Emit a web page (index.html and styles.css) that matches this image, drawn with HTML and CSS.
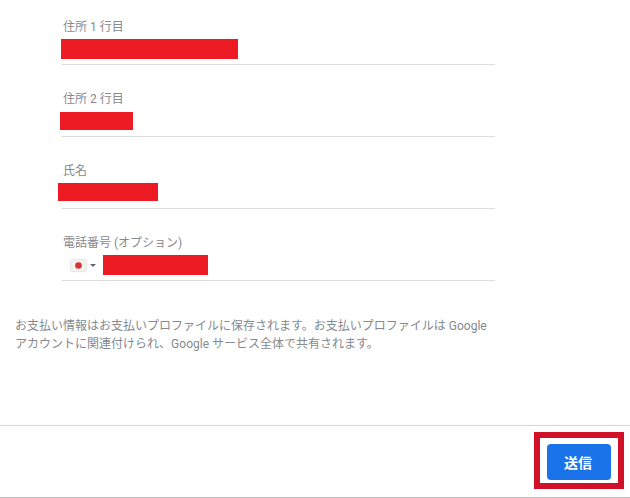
FILE: index.html
```html
<html>
    <head>
        <title>お支払い情報</title>
        <link rel="stylesheet" href="styles.css">
    </head>
    <body>
        <div class="form">
            <div class="field">
                <div class="label">住所 1 行目</div>
                <div class="value"><span class="redact redact1"></span></div>
            </div>
            <div class="field">
                <div class="label">住所 2 行目</div>
                <div class="value"><span class="redact redact2"></span></div>
            </div>
            <div class="field">
                <div class="label">氏名</div>
                <div class="value"><span class="redact redact3"></span></div>
            </div>
            <div class="field">
                <div class="label">電話番号 (オプション)</div>
                <div class="value">
                    <svg class="flag" width="15" height="11" viewBox="0 0 15 11">
                        <rect width="15" height="11" fill="#f4f2ee"/>
                        <circle cx="7.5" cy="5.5" r="3.3" fill="#d9303c"/>
                    </svg>
                    <span class="arrow"></span>
                    <span class="redact redact4"></span>
                </div>
            </div>
        </div>

        <p class="notice">お支払い情報はお支払いプロファイルに保存されます。お支払いプロファイルは Google<br>アカウントに関連付けられ、Google サービス全体で共有されます。</p>

        <div class="footer">
            <div class="highlight">
                <button class="submit">送信</button>
            </div>
        </div>
    </body>
</html>
```

FILE: styles.css
```css
body {
    margin: 0;
    height: 498px;
    overflow: hidden;
    background: white;
    font-family: "Roboto", "Noto Sans CJK JP", sans-serif;
    color: #868a8e;
    display: flex;
    flex-direction: column;
}

.form {
    padding: 18px 135px 0 62px;
}

.field {
    height: 46px;
    margin-bottom: 25px;
    border-bottom: 1px solid #dadce0;
}

.label {
    font-size: 12px;
    line-height: 18px;
    margin-left: 1px;
}

.value {
    display: flex;
    align-items: center;
    height: 20px;
    margin-top: 3px;
}

.redact {
    display: block;
    background: #ed1c24;
}

.redact1 {
    width: 177px;
    height: 20px;
    margin-left: -1px;
}

.redact2 {
    width: 73px;
    height: 18px;
    margin-left: -2px;
}

.redact3 {
    width: 100px;
    height: 18px;
    margin-left: -4px;
    margin-top: -2px;
}

.redact4 {
    width: 105px;
    height: 20px;
    margin-left: 7px;
}

.flag {
    margin-left: 9px;
    box-shadow: 0 0 2px #bbb;
}

.arrow {
    margin-left: 4px;
    border-top: 3px solid #5f6368;
    border-left: 3px solid transparent;
    border-right: 3px solid transparent;
}

.notice {
    margin: 11px 0 0 15px;
    font-size: 12px;
    line-height: 18px;
}

.footer {
    margin-top: auto;
    height: 65px;
    border-top: 1px solid #d4d4d4;
    border-bottom: 1px solid #bdbdbd;
    display: flex;
    justify-content: flex-end;
    align-items: flex-start;
    padding: 6px 6px 0 0;
}

.highlight {
    border: 6px solid #d01127;
    padding: 6px 7px 3px 7px;
    display: flex;
}

.submit {
    width: 64px;
    height: 36px;
    padding: 0 2px 0 0;
    border: 0px;
    border-radius: 4px;
    background: #1a73e8;
    color: white;
    font-family: inherit;
    font-size: 14px;
    font-weight: 700;
}
```
